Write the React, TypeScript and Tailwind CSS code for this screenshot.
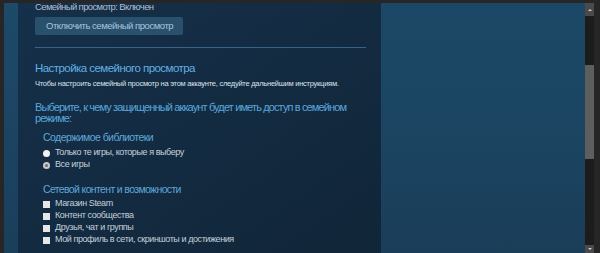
import React from "react";

const font = { fontFamily: '"Liberation Sans", Arial, sans-serif' };

function Radio({ checked, label }: { checked?: boolean; label: string }) {
  return (
    <div className="flex h-[12px] items-center gap-[5px]">
      <span
        className={
          checked
            ? "flex h-[7px] w-[7px] items-center justify-center rounded-full bg-[#c9c9c9]"
            : "h-[7px] w-[7px] rounded-full bg-[#f2f2f2]"
        }
      >
        {checked && <span className="h-[3px] w-[3px] rounded-full bg-[#6d6d6d]" />}
      </span>
      <span className="whitespace-nowrap text-[9px] tracking-[-0.42px] text-[#c4d0db]">{label}</span>
    </div>
  );
}

function Check({ label }: { label: string }) {
  return (
    <div className="flex h-[12px] items-center gap-[5px]">
      <span className="h-[7px] w-[7px] bg-[#e6e6e6]" />
      <span className="whitespace-nowrap text-[9px] tracking-[-0.42px] text-[#c4d0db]">{label}</span>
    </div>
  );
}

export default function App() {
  return (
    <div className="flex h-[253px] w-[600px] flex-col overflow-hidden bg-[#262626]" style={font}>
      <div className="h-[3px] shrink-0 bg-[#262626]" />
      <div className="flex min-h-0 flex-1">
        <div className="w-[4px] shrink-0 bg-[#262626]" />
        <div className="w-[14px] shrink-0 bg-gradient-to-b from-[#1d4a69] to-[#1a3f5b]" />
        <div className="w-[363px] shrink-0 bg-gradient-to-br from-[#15304a] via-[#132b41] to-[#112538] pl-[17px] pr-[15px]">
          <div className="-mt-[2px] whitespace-nowrap text-[9.5px] leading-[12px] tracking-[-0.63px] text-[#aebfcd]">
            Семейный просмотр: Включен
          </div>
          <div className="mt-[4px] flex h-[18px] w-[148px] items-center rounded-[2px] bg-[#29506d] pl-[11px] text-[9.5px] tracking-[-0.46px] whitespace-nowrap text-[#a6c6de]">
            Отключить семейный просмотр
          </div>
          <div className="mt-[12px] h-px bg-[#356486]" />
          <div className="mt-[12px] whitespace-nowrap text-[11.5px] leading-[16px] tracking-[-0.55px] text-[#62b1e4]">
            Настройка семейного просмотра
          </div>
          <div className="mt-[3px] whitespace-nowrap text-[7.5px] leading-[10px] tracking-[-0.25px] text-[#dbe3ea]">
            Чтобы настроить семейный просмотр на этом аккаунте, следуйте дальнейшим инструкциям.
          </div>
          <div className="mt-[13px] whitespace-nowrap text-[11px] leading-[11px] tracking-[-0.87px] text-[#59a7dc]">
            Выберите, к чему защищенный аккаунт будет иметь доступ в семейном
            <br />
            режиме:
          </div>
          <div className="pl-[8px]">
            <div className="mt-[6px] whitespace-nowrap text-[10.5px] leading-[14px] tracking-[-0.55px] text-[#5ea7da]">
              Содержимое библиотеки
            </div>
            <div className="mt-[3px] flex flex-col">
              <Radio label="Только те игры, которые я выберу" />
              <Radio checked label="Все игры" />
            </div>
            <div className="mt-[11px] whitespace-nowrap text-[10.5px] leading-[14px] tracking-[-0.64px] text-[#5ea7da]">
              Сетевой контент и возможности
            </div>
            <div className="mt-[2px] flex flex-col">
              <Check label="Магазин Steam" />
              <Check label="Контент сообщества" />
              <Check label="Друзья, чат и группы" />
              <Check label="Мой профиль в сети, скриншоты и достижения" />
            </div>
          </div>
        </div>
        <div className="flex-1 bg-gradient-to-b from-[#1b4866] via-[#1b4562] to-[#1a3d58]" />
        <div className="flex w-[9px] shrink-0 flex-col bg-[#1c1c1c]">
          <div className="flex h-[13px] items-center justify-center bg-[#4a4a4a]">
            <span className="h-0 w-0 border-x-[2px] border-b-[2px] border-x-transparent border-b-[#cfcfcf]" />
          </div>
          <div className="h-[49px]" />
          <div className="h-[94px] bg-[#5e5e5e]" />
          <div className="flex-1" />
          <div className="flex h-[8px] items-start justify-center bg-[#4a4a4a] pt-[3px]">
            <span className="h-0 w-0 border-x-[2px] border-t-[2px] border-x-transparent border-t-[#cfcfcf]" />
          </div>
        </div>
        <div className="w-[6px] shrink-0 bg-[#262626]" />
      </div>
    </div>
  );
}
